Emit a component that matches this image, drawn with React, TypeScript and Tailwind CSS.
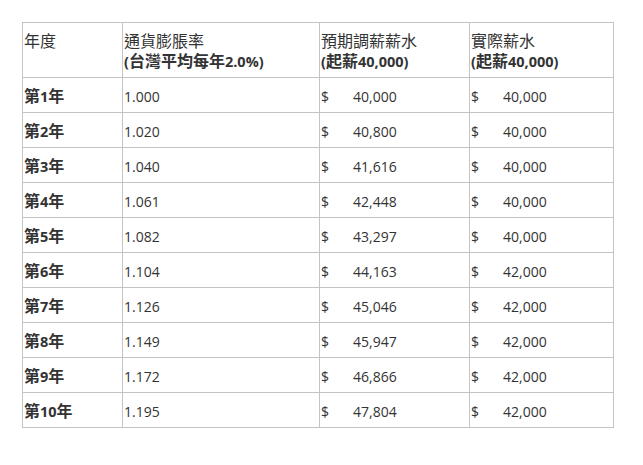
import React from "react";

const rows = [
  ["第1年", "1.000", "40,000", "40,000"],
  ["第2年", "1.020", "40,800", "40,000"],
  ["第3年", "1.040", "41,616", "40,000"],
  ["第4年", "1.061", "42,448", "40,000"],
  ["第5年", "1.082", "43,297", "40,000"],
  ["第6年", "1.104", "44,163", "42,000"],
  ["第7年", "1.126", "45,046", "42,000"],
  ["第8年", "1.149", "45,947", "42,000"],
  ["第9年", "1.172", "46,866", "42,000"],
  ["第10年", "1.195", "47,804", "42,000"],
];

const cell = "border border-[#c4c4c4] py-[7px] pl-[1px] align-top";

function T({ s, bold }: { s: string; bold?: boolean }) {
  const parts = s.split(/([\u3000-\u9fff\uff00-\uffef]+)/).filter((p) => p.length > 0);
  return (
    <>
      {parts.map((p, i) =>
        /[\u3000-\u9fff\uff00-\uffef]/.test(p) ? (
          <span key={i}>{p}</span>
        ) : (
          <span
            key={i}
            className={`leading-none font-['Open_Sans',sans-serif] ${bold ? "text-[14.5px]" : "text-[14px]"}`}
          >
            {p}
          </span>
        )
      )}
    </>
  );
}

function Money({ v }: { v: string }) {
  return (
    <div className="flex h-[20px] items-center">
      <span className="w-[32px]">
        <T s="$" />
      </span>
      <span>
        <T s={v} />
      </span>
    </div>
  );
}

export default function App() {
  return (
    <div
      className="bg-white w-[643px] h-[465px] pt-[22px] pl-[22px] text-[#333333] text-[16px] leading-[20px]"
      style={{ fontFamily: '"Noto Sans CJK TC", "Noto Sans", sans-serif' }}
    >
      <table className="border-collapse w-[591px] table-fixed">
        <colgroup>
          <col className="w-[100px]" />
          <col className="w-[197px]" />
          <col className="w-[150px]" />
          <col className="w-[144px]" />
        </colgroup>
        <thead>
          <tr>
            <th className={`${cell} text-left font-normal`}>
              <div className="h-[40px]">年度</div>
            </th>
            <th className={`${cell} text-left font-normal`}>
              <div className="h-[20px]">通貨膨脹率</div>
              <div className="h-[20px] font-bold">
                <T s="(台灣平均每年2.0%)" bold />
              </div>
            </th>
            <th className={`${cell} text-left font-normal`}>
              <div className="h-[20px]">預期調薪薪水</div>
              <div className="h-[20px] font-bold">
                <T s="(起薪40,000)" bold />
              </div>
            </th>
            <th className={`${cell} text-left font-normal`}>
              <div className="h-[20px]">實際薪水</div>
              <div className="h-[20px] font-bold">
                <T s="(起薪40,000)" bold />
              </div>
            </th>
          </tr>
        </thead>
        <tbody>
          {rows.map((r) => (
            <tr key={r[0]}>
              <td className={`${cell} font-bold`}>
                <div className="h-[20px]">
                  <T s={r[0]} bold />
                </div>
              </td>
              <td className={cell}>
                <div className="h-[20px]">
                  <T s={r[1]} />
                </div>
              </td>
              <td className={cell}>
                <Money v={r[2]} />
              </td>
              <td className={cell}>
                <Money v={r[3]} />
              </td>
            </tr>
          ))}
        </tbody>
      </table>
    </div>
  );
}
